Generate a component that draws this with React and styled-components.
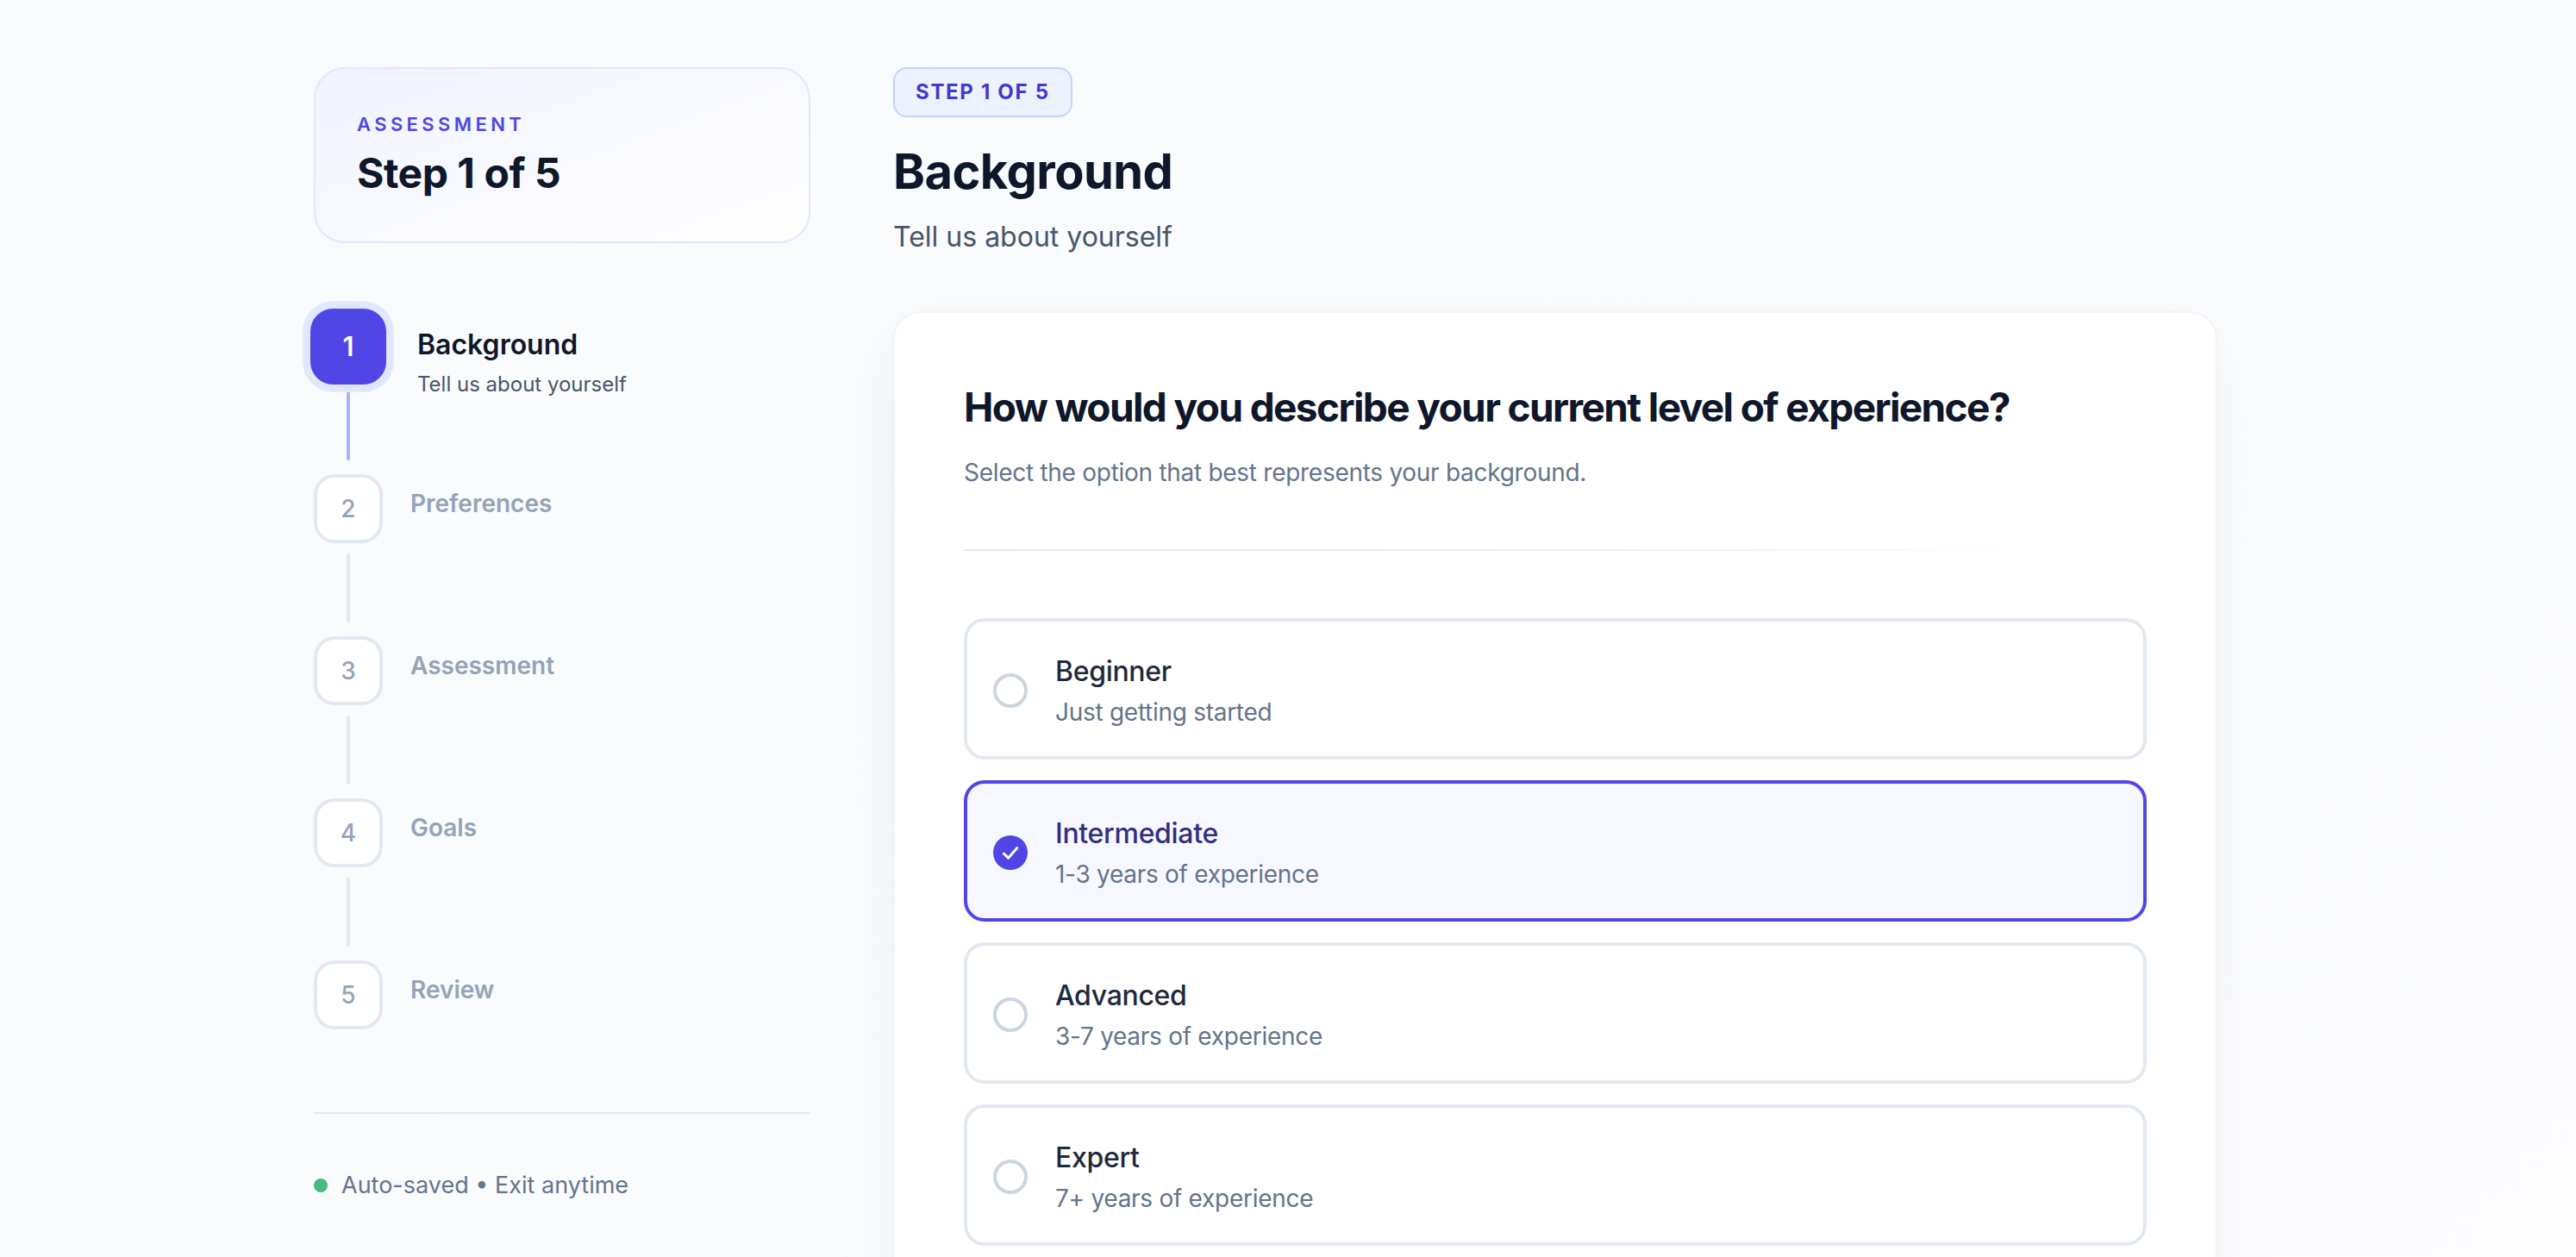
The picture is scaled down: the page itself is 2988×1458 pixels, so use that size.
import React from "react";
import styled, { createGlobalStyle, css } from "styled-components";

const GlobalStyle = createGlobalStyle`
  html { zoom: 2; }
  html, body { margin: 0; padding: 0; }
  body {
    font-family: Inter, "Noto Sans", "Liberation Sans", sans-serif;
    -webkit-font-smoothing: antialiased;
    background: #f9fafc;
    color: #0f172a;
  }
  * { box-sizing: border-box; }
`;

const Page = styled.div`
  min-height: 100vh;
  background: linear-gradient(135deg, #f8fafc 0%, #fbfcfe 60%, #ffffff 100%);
`;

const Container = styled.div`
  width: 1130px;
  margin: 0 auto;
  padding: 39px 0 0;
  display: flex;
  align-items: flex-start;
  gap: 48px;
`;

const Sidebar = styled.aside`
  width: 288px;
  flex-shrink: 0;
`;

const SummaryCard = styled.div`
  border: 1px solid #e0e7ff;
  border-radius: 18px;
  padding: 24px 24px 25px;
  background: linear-gradient(160deg, #f0f3ff 0%, #f8f9ff 50%, #ffffff 100%);
`;

const Eyebrow = styled.div`
  font-size: 11px;
  line-height: 16px;
  font-weight: 600;
  letter-spacing: 0.2em;
  text-transform: uppercase;
  color: #4f46e5;
`;

const SummaryTitle = styled.div`
  margin-top: 6px;
  font-size: 24px;
  line-height: 1.2;
  font-weight: 700;
  letter-spacing: -0.01em;
  color: #0f172a;
`;

const StepList = styled.ol`
  list-style: none;
  margin: 40px 0 0;
  padding: 0;
`;

const StepRow = styled.li`
  display: flex;
  align-items: flex-start;
  gap: 16px;
`;

const Rail = styled.div`
  width: 40px;
  display: flex;
  flex-direction: column;
  align-items: center;
  flex-shrink: 0;
`;

const StepBox = styled.div`
  width: 40px;
  height: 40px;
  border-radius: 12px;
  border: 2px solid #e2e8f0;
  background: #ffffff;
  display: flex;
  align-items: center;
  justify-content: center;
  font-size: 14px;
  font-weight: 500;
  color: #94a3b8;
  ${(p) =>
    p.$active &&
    css`
      background: #4f46e5;
      border-color: #4f46e5;
      color: #ffffff;
      font-weight: 600;
      transform: scale(1.1);
      box-shadow: 0 0 0 4px #e0e7ff;
    `}
`;

const Connector = styled.div`
  width: 2px;
  height: 40px;
  margin: 6px 0 8px;
  border-radius: 1px;
  background: ${(p) => (p.$done ? "#a5b4fc" : "#e2e8f0")};
`;

const StepText = styled.div`
  padding-top: 7px;
  ${(p) =>
    p.$active &&
    css`
      transform: translateX(4px);
    `}
`;

const StepName = styled.div`
  font-size: 14px;
  line-height: 20px;
  font-weight: 600;
  color: #94a3b8;
  ${(p) =>
    p.$active &&
    css`
      font-size: 16px;
      line-height: 24px;
      color: #0f172a;
    `}
`;

const StepHint = styled.div`
  margin-top: 2px;
  font-size: 12px;
  line-height: 18px;
  color: #475569;
`;

const SideDivider = styled.hr`
  margin: 48px 0 0;
  border: 0;
  height: 1px;
  background: #e2e8f0;
`;

const SaveNote = styled.div`
  margin-top: 31px;
  display: flex;
  align-items: center;
  gap: 8px;
  font-size: 13.5px;
  line-height: 21px;
  color: #64748b;
`;

const Dot = styled.span`
  width: 8px;
  height: 8px;
  border-radius: 50%;
  background: #4cb883;
  flex-shrink: 0;
`;

const Main = styled.main`
  flex: 1;
  max-width: 768px;
`;

const Badge = styled.span`
  display: inline-flex;
  align-items: center;
  padding: 6px 12px;
  border: 1px solid #c7d2fe;
  background: #eef2ff;
  border-radius: 8px;
  font-size: 12px;
  line-height: 15px;
  font-weight: 700;
  letter-spacing: 0.07em;
  color: #4338ca;
`;

const Heading = styled.h1`
  margin: 15px 0 0;
  font-size: 28px;
  line-height: 1.2;
  font-weight: 700;
  letter-spacing: -0.01em;
  color: #0f172a;
`;

const Subheading = styled.p`
  margin: 9px 0 0;
  font-size: 16px;
  line-height: 24px;
  color: #475569;
`;

const QuestionCard = styled.section`
  margin-top: 31px;
  background: #ffffff;
  border: 1px solid #f1f5f9;
  border-radius: 16px;
  padding: 40px 40px 48px;
  box-shadow: 0 1px 2px rgba(15, 23, 42, 0.03), 0 12px 40px rgba(15, 23, 42, 0.05);
`;

const Question = styled.h2`
  margin: 0;
  font-size: 23px;
  line-height: 1.3;
  font-weight: 700;
  letter-spacing: -0.035em;
  color: #0f172a;
`;

const Help = styled.p`
  margin: 12px 0 0;
  font-size: 14px;
  line-height: 21px;
  letter-spacing: -0.01em;
  color: #64748b;
`;

const FadeDivider = styled.div`
  margin: 34px 0 39px;
  height: 1px;
  background: linear-gradient(90deg, #e2e8f0 0%, rgba(226, 232, 240, 0.6) 60%, rgba(226, 232, 240, 0) 90%);
`;

const Options = styled.div`
  display: flex;
  flex-direction: column;
  gap: 12px;
`;

const Option = styled.label`
  display: flex;
  align-items: center;
  gap: 16px;
  padding: 17px 15px 15px;
  border: 2px solid #e2e8f0;
  border-radius: 12px;
  background: #ffffff;
  cursor: pointer;
  ${(p) =>
    p.$selected &&
    css`
      border-color: #4f46e5;
      background: #f7f8ff;
    `}
`;

const Radio = styled.span`
  width: 20px;
  height: 20px;
  border-radius: 50%;
  border: 2px solid #cbd5e1;
  background: #ffffff;
  flex-shrink: 0;
  display: flex;
  align-items: center;
  justify-content: center;
  ${(p) =>
    p.$selected &&
    css`
      border: 0;
      background: #4f46e5;
    `}
`;

const OptionTitle = styled.div`
  font-size: 16px;
  line-height: 24px;
  font-weight: 500;
  letter-spacing: -0.01em;
  color: ${(p) => (p.$selected ? "#312e81" : "#1e293b")};
`;

const OptionSub = styled.div`
  margin-top: 1px;
  font-size: 14px;
  line-height: 21px;
  letter-spacing: -0.01em;
  color: #64748b;
`;

const steps = [
  { n: 1, name: "Background", hint: "Tell us about yourself" },
  { n: 2, name: "Preferences" },
  { n: 3, name: "Assessment" },
  { n: 4, name: "Goals" },
  { n: 5, name: "Review" },
];

const options = [
  { title: "Beginner", sub: "Just getting started" },
  { title: "Intermediate", sub: "1-3 years of experience" },
  { title: "Advanced", sub: "3-7 years of experience" },
  { title: "Expert", sub: "7+ years of experience" },
];

const Check = () => (
  <svg width="20" height="20" viewBox="0 0 20 20" fill="none">
    <path d="M6.2 10.6 L8.8 13.1 L13.9 7.3" stroke="#ffffff" strokeWidth="1.5" strokeLinecap="round" strokeLinejoin="round" />
  </svg>
);

export default function App() {
  const current = 1;
  const selected = 1;
  return (
    <>
      <GlobalStyle />
      <Page>
        <Container>
          <Sidebar>
            <SummaryCard>
              <Eyebrow>Assessment</Eyebrow>
              <SummaryTitle>Step 1 of 5</SummaryTitle>
            </SummaryCard>
            <StepList>
              {steps.map((s, i) => {
                const active = s.n === current;
                return (
                  <StepRow key={s.n}>
                    <Rail>
                      <StepBox $active={active}>{s.n}</StepBox>
                      {i < steps.length - 1 && <Connector $done={s.n <= current} />}
                    </Rail>
                    <StepText $active={active}>
                      <StepName $active={active}>{s.name}</StepName>
                      {active && s.hint && <StepHint>{s.hint}</StepHint>}
                    </StepText>
                  </StepRow>
                );
              })}
            </StepList>
            <SideDivider />
            <SaveNote>
              <Dot />
              Auto-saved • Exit anytime
            </SaveNote>
          </Sidebar>
          <Main>
            <Badge>STEP 1 OF 5</Badge>
            <Heading>Background</Heading>
            <Subheading>Tell us about yourself</Subheading>
            <QuestionCard>
              <Question>How would you describe your current level of experience?</Question>
              <Help>Select the option that best represents your background.</Help>
              <FadeDivider />
              <Options>
                {options.map((o, i) => {
                  const sel = i === selected;
                  return (
                    <Option key={o.title} $selected={sel}>
                      <Radio $selected={sel}>{sel && <Check />}</Radio>
                      <div>
                        <OptionTitle $selected={sel}>{o.title}</OptionTitle>
                        <OptionSub>{o.sub}</OptionSub>
                      </div>
                    </Option>
                  );
                })}
              </Options>
            </QuestionCard>
          </Main>
        </Container>
      </Page>
    </>
  );
}
